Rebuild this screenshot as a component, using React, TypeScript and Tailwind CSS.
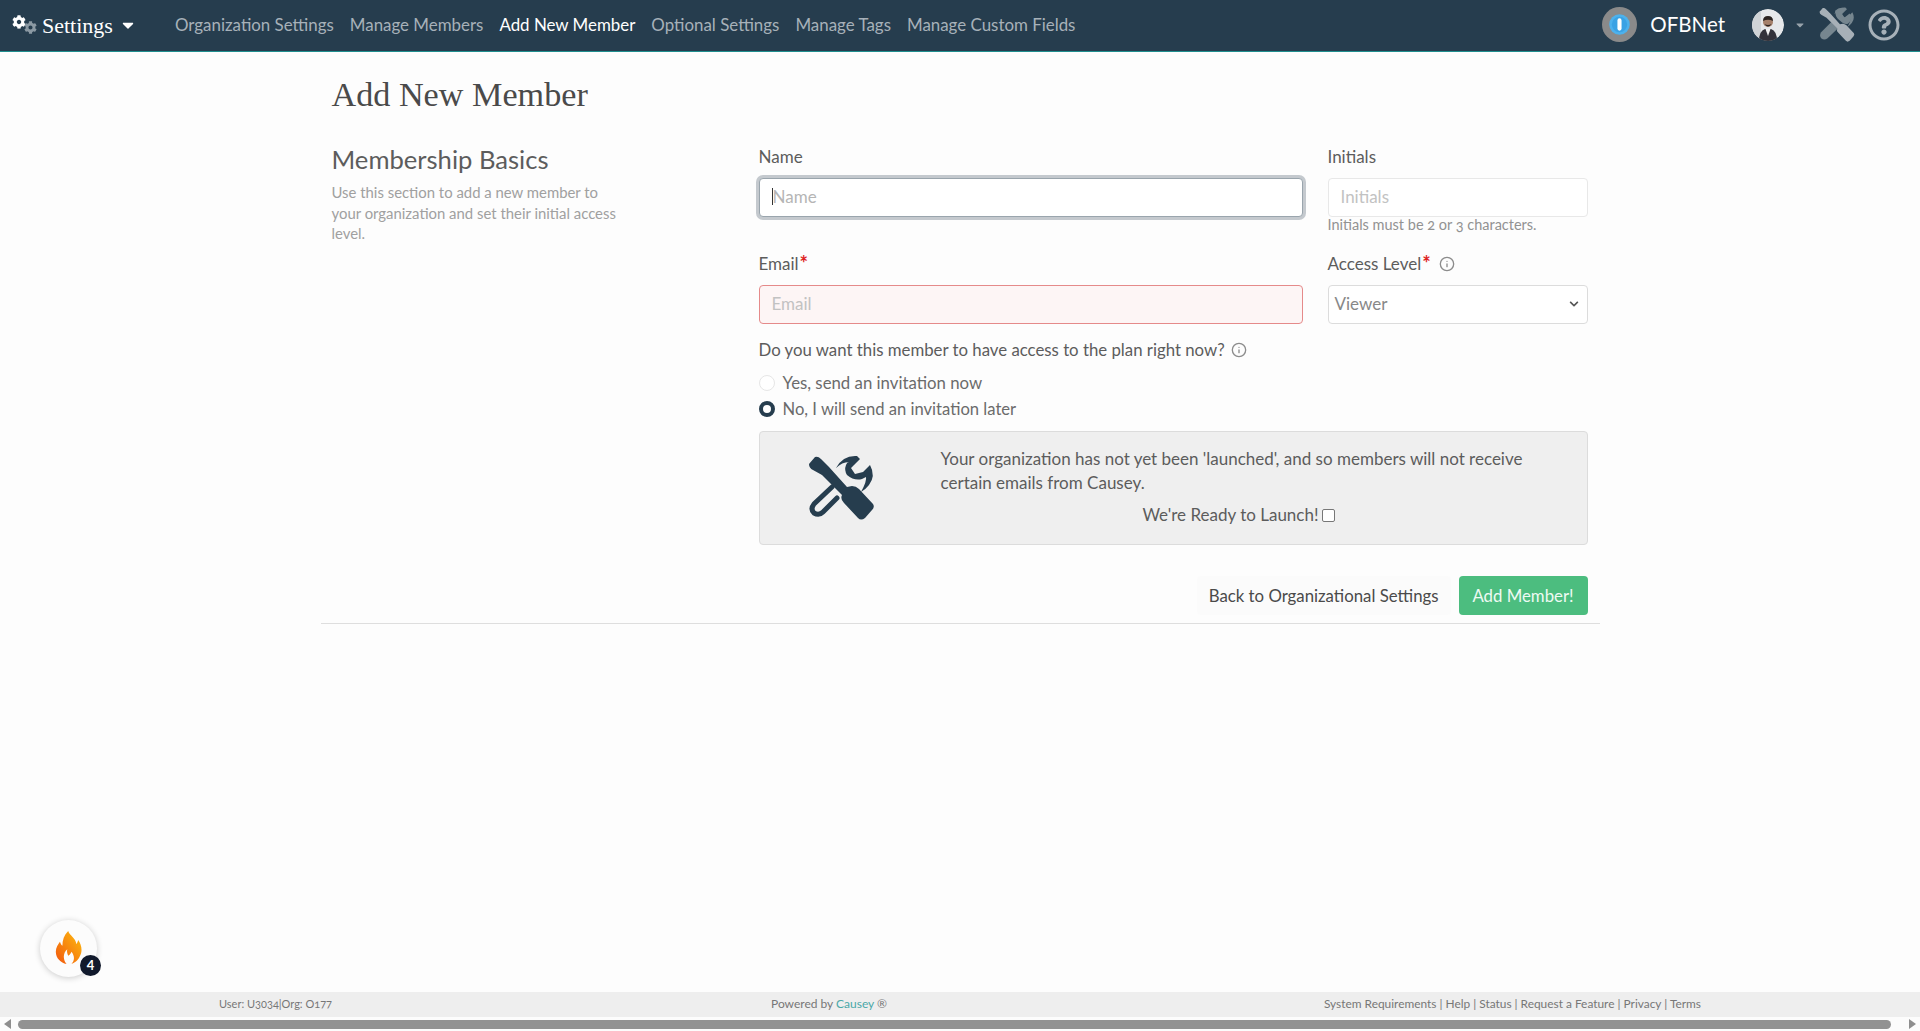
import { FaCog, FaCaretDown, FaRegQuestionCircle, FaChevronDown } from "react-icons/fa";
import { Info } from "lucide-react";
import type { ReactNode } from "react";

const Tools = ({ className, viewBox, driver, wrench, solid }: { className?: string; viewBox: string; driver: string; wrench: string; solid?: boolean }) => (
  <svg viewBox={viewBox} className={className}>
    <path fill={wrench} d="M36 18 Q43 5 57 6 L60 9 L51 18 L55 24 L63 22 L70 15 Q76 26 69 35 Q66 39 61 42 Q67 31 66 27 L62 29 Q54 31 47 25 Q44 20 46 15 Q47 12 49 12 Q42 12 36 18 Z" />
    {solid ? (
      <>
        <path fill={wrench} d="M38 12 Q47 3 59 8 L50 18 L55 25 L65 17 Q72 28 62 36 Q55 38 50 33 L44 28 Q38 22 38 12 Z" />
        <path fill={wrench} d="M31 33 L12 52 Q8 58 12 63 Q18 68 24 63 L43 45 Z" />
      </>
    ) : (
      <path fill="none" stroke={wrench} strokeWidth="5" strokeLinecap="round" d="M32 37 L14 54 Q10 59 14 63 Q19 66 23 62 L37 48" />
    )}
    <path fill={driver} d="M9 14 L15 7 Q18 6 21 9 L29 17 L47 37 L52 36 Q56 36 59 39 L73 54 Q75 57 72 60 L65 68 Q61 71 58 68 L44 53 Q40 49 42 45 L22 25 L13 20 Q9 18 9 14 Z" />
  </svg>
);

const Req = () => <span className="text-[#d22] text-[20px] font-bold leading-none relative -top-[4px] ml-[1px] h-[14px]">*</span>;

function Label({ children }: { children: ReactNode }) {
  return <label className="h-[19px] flex items-center text-[17px] text-[#5c5c5c] mb-[12px]">{children}</label>;
}

export default function App() {
  const font = "font-['Lato','Liberation_Sans',sans-serif] [font-variant-numeric:oldstyle-nums]";
  return (
    <div className={`h-[1031px] w-full overflow-hidden flex flex-col bg-[#fdfdfd] ${font}`}>
      <header className="h-[52px] shrink-0 bg-[#263d4e] border-b border-[#1f8f8f] flex items-center pl-3 pr-5 pb-[2px]">
        <div className="flex items-center w-[163px]">
          <span className="relative w-[26px] h-[24px] mr-[4px]">
            <FaCog className="absolute left-0 top-0.5 text-white text-[14px]" />
            <FaCog className="absolute left-3 top-2 text-[#8b99a3] text-[13px]" />
          </span>
          <span className="font-['Liberation_Serif',serif] text-white text-[22px] leading-none relative top-[1px]">Settings</span>
          <FaCaretDown className="text-white text-[18px] ml-[6px]" />
        </div>
        <nav className="flex gap-4 text-[16.9px] text-[#a7b1b9]">
          <span>Organization Settings</span>
          <span>Manage Members</span>
          <span className="text-white">Add New Member</span>
          <span>Optional Settings</span>
          <span>Manage Tags</span>
          <span>Manage Custom Fields</span>
        </nav>
        <div className="ml-auto flex items-center">
          <svg viewBox="0 0 34 34" className="w-[35px] h-[35px] mr-[13px]">
            <circle cx="17" cy="17" r="17" fill="#8a8a8a" />
            <circle cx="17" cy="17" r="10" fill="#4db1ec" />
            <circle cx="17" cy="17" r="7.5" fill="#3aa2e4" />
            <rect x="15" y="11" width="4" height="12" rx="2" fill="#fff" />
          </svg>
          <span className="text-white text-[20.5px] mr-[27px] -mt-[1px]">OFBNet</span>
          <svg viewBox="0 0 32 32" className="w-[32px] h-[32px] rounded-full">
            <circle cx="16" cy="16" r="16" fill="#e6e8ea" />
            <path d="M0 0 H9 V32 H0 Z" fill="#cfd3d6" />
            <path d="M7 32 Q7 22 13 20 L19 20 Q25 22 25 32 Z" fill="#33323a" />
            <path d="M13.5 20 L16 27 L18.5 20 Z" fill="#f1f1f1" />
            <circle cx="16" cy="13" r="5" fill="#a5806a" />
            <path d="M11 12 Q11 7 16 7 Q21 7 21 12 Q16 9.5 11 12 Z" fill="#2b2320" />
            <path d="M12.5 15 Q16 20 19.5 15 Q16 17 12.5 15 Z" fill="#2b2320" />
          </svg>
          <FaCaretDown className="text-[#98a3ab] text-[12px] ml-[10px] mr-[13px]" />
          <Tools className="w-[36px] h-[36px] mr-[13px]" viewBox="8 5 67 67" driver="#a7b0b7" wrench="#76868f" solid />
          <FaRegQuestionCircle className="text-[#a7b1b9] text-[32px]" />
        </div>
      </header>

      <main className="flex-1 min-h-0 relative">
        <div className="w-[1279px] mx-auto">
          <div className="pl-[10px] pr-[12px] border-b border-[#dedede] pb-[8px]">
            <h1 className="font-['Liberation_Serif',serif] text-[34.2px] leading-none text-[#4a4a4a] pt-[26px] h-[89px] pl-px">Add New Member</h1>
            <div className="flex">
              <div className="w-[428px] shrink-0">
                <h2 className="text-[25.6px] leading-[36px] text-[#5c5c5c] mb-[5px] pl-px">Membership Basics</h2>
                <p className="text-[14.9px] leading-[20.5px] text-[#a0a0a0] w-[294px] pl-px">Use this section to add a new member to your organization and set their initial access level.</p>
              </div>
              <div className="flex-1 mt-[6px]">
                <div className="grid grid-cols-[544px_260px] gap-x-[25px]">
                  <div>
                    <Label>Name</Label>
                    <div className="h-[39px] rounded bg-white border border-[#9aa5ad] ring-[3px] ring-[#c4c9ce] flex items-center px-3 pb-[2px] text-[17px] text-[#b5b5b5]">
                      <span className="w-px h-[17px] bg-[#333]" />Name
                    </div>
                  </div>
                  <div>
                    <Label>Initials</Label>
                    <div className="h-[39px] rounded bg-white border border-[#e8e8e8] flex items-center px-3 pb-[2px] text-[17px] text-[#c2c2c2]">Initials</div>
                    <div className="text-[14.5px] leading-[18px] text-[#929292] -mt-[1px]">Initials must be 2 or 3 characters.</div>
                  </div>
                </div>
                <div className="grid grid-cols-[544px_260px] gap-x-[25px] mt-[20px]">
                  <div>
                    <Label>Email<Req /></Label>
                    <div className="h-[39px] rounded bg-[#fdf5f5] border border-[#e58a8a] flex items-center px-3 pb-[2px] text-[17px] text-[#c2c2c2]">Email</div>
                  </div>
                  <div>
                    <Label>Access Level<Req /><Info className="w-4 h-4 ml-[8px] text-[#8c8c8c]" /></Label>
                    <div className="h-[39px] rounded bg-white border border-[#dcdcdc] flex items-center justify-between pl-[6px] pr-[8px] pb-[2px] text-[17px] text-[#888]">
                      Viewer<FaChevronDown className="text-[10px] text-[#555]" />
                    </div>
                  </div>
                </div>
                <div className="flex items-center text-[16.8px] text-[#5c5c5c] mt-[16px] h-[19px]">
                  Do you want this member to have access to the plan right now?
                  <Info className="w-4 h-4 ml-[6px] text-[#8c8c8c]" />
                </div>
                <div className="flex items-center text-[16.8px] text-[#6b6b6b] mt-[14px] h-[20px]">
                  <span className="w-4 h-4 rounded-full bg-white border border-[#e6e6e6] mr-2" />Yes, send an invitation now
                </div>
                <div className="flex items-center text-[16.6px] text-[#6b6b6b] mt-[6px] h-[20px]">
                  <span className="w-4 h-4 rounded-full bg-white border-[4.5px] border-[#263d4e] mr-2" />No, I will send an invitation later
                </div>
                <div className="mt-[12px] h-[114px] rounded bg-[#efefef] border border-[#dcdcdc] flex">
                  <div className="w-[181px] shrink-0 pl-[40px] pt-[18px]">
                    <Tools className="w-20 h-20" viewBox="0 0 80 80" driver="#263d4e" wrench="#263d4e" />
                  </div>
                  <div className="flex-1 pr-[50px] pt-[15px] text-[17px] leading-[24px] text-[#5c5c5c]">
                    <p>Your organization has not yet been 'launched', and so members will not receive certain emails from Causey.</p>
                    <div className="flex items-center justify-center mt-[8px] h-[24px]">
                      We're Ready to Launch!
                      <span className="w-[13px] h-[13px] ml-[3px] rounded-[2px] border border-[#777] bg-white" />
                    </div>
                  </div>
                </div>
                <div className="flex justify-end gap-2 mt-[31px]">
                  <div className="h-[39px] px-3 flex items-center text-[16.8px] text-[#4a4a4a] bg-[#fbfbfb] rounded">Back to Organizational Settings</div>
                  <div className="h-[39px] w-[129px] flex items-center justify-center text-[16.8px] text-[#eefaf3] bg-[#4cbd7f] rounded">Add Member!</div>
                </div>
              </div>
            </div>
          </div>
        </div>

        <div className="absolute left-[40px] bottom-[15px] w-[57px] h-[57px] rounded-full bg-[#fcfcfc] shadow-[0_1px_6px_rgba(0,0,0,0.2)] flex items-center justify-center">
          <svg viewBox="0 0 32 40" className="w-[28px] h-[33px] -mt-[2px]">
            <defs>
              <linearGradient id="fl" x1="0" y1="1" x2="1" y2="0">
                <stop offset="0" stopColor="#f2560f" />
                <stop offset="1" stopColor="#fdc00f" />
              </linearGradient>
            </defs>
            <path fill="url(#fl)" d="M15 0 C17 6 24 8 25 16 C26 14 27 13 27 11 C31 16 33 24 29 31 C27 36 22 39 19 40 C23 36 23 30 19 25 C18 28 16 29 15 30 C14 27 13 25 14 22 C9 26 8 34 13 40 C6 38 0 33 0 25 C0 20 3 16 5 13 C6 16 7 17 8 18 C8 11 10 5 15 0 Z" />
          </svg>
          <span className="absolute -right-[4px] bottom-[1px] w-[21px] h-[21px] rounded-full bg-[#111a2c] text-white text-[13px] font-bold [font-variant-numeric:lining-nums] flex items-center justify-center">4</span>
        </div>
      </main>

      <footer className="h-[25px] shrink-0 bg-[#eeeeee] flex items-center text-[#777] pb-px">
        <div className="pl-[219px] w-[771px] text-[11px]">User: U3034|Org: O177</div>
        <div className="text-[12px]">Powered by <span className="text-[#4aa8a8]">Causey</span> ®</div>
        <div className="ml-auto pr-[219px] text-[11.9px]">System Requirements | Help | Status | Request a Feature | Privacy | Terms</div>
      </footer>
      <div className="h-[14px] shrink-0 bg-[#fcfcfc] flex items-center px-[4px] gap-[7px]">
        <span className="w-0 h-0 border-y-[5px] border-y-transparent border-r-[7px] border-r-[#8e8e8e]" />
        <span className="flex-1 h-[9px] rounded-full bg-[#929292] mr-[11px]" />
        <span className="w-0 h-0 border-y-[5px] border-y-transparent border-l-[7px] border-l-[#8e8e8e]" />
      </div>
    </div>
  );
}
